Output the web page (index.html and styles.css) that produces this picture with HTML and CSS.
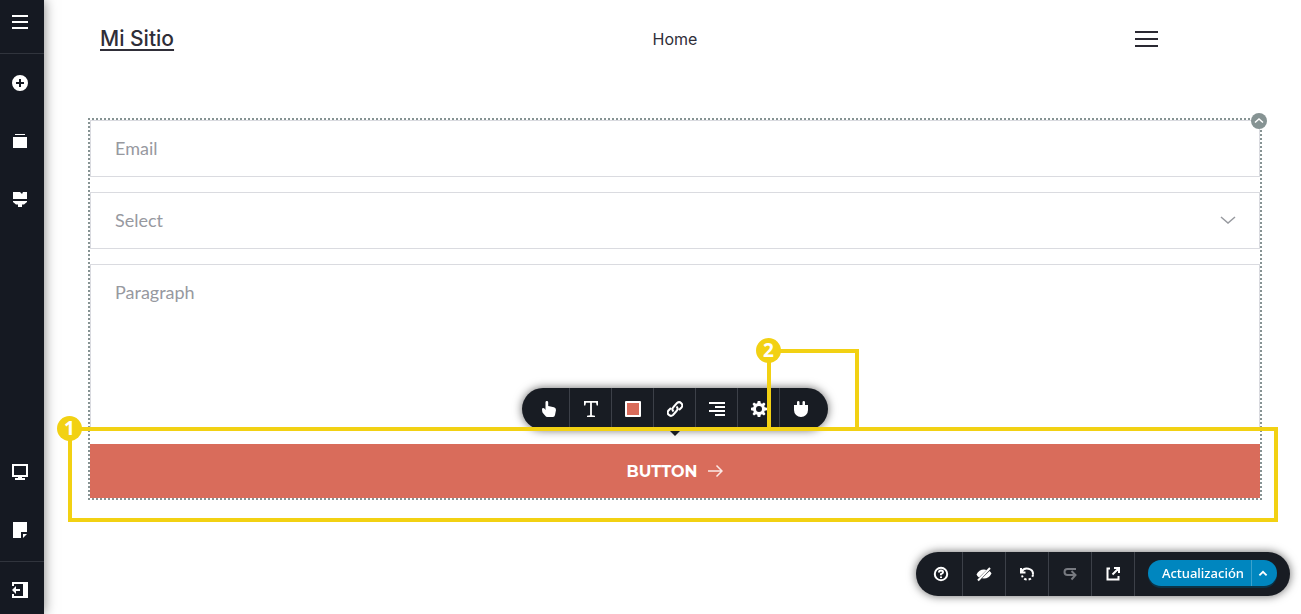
FILE: index.html
```html
<!DOCTYPE html>
<html lang="es">
<head>
    <meta charset="UTF-8">
    <meta name="viewport" content="width=device-width, initial-scale=1.0">
    <title>Mi Sitio</title>
    <link rel="stylesheet" href="styles.css">
</head>
<body>
    <aside class="sidebar">
        <button type="button" class="side-btn side-menu" aria-label="Menu">
            <svg class="icon" viewBox="0 0 16 16"><path d="M0 1h16v2H0zM0 7h16v2H0zM0 13h16v2H0z"/></svg>
        </button>
        <button type="button" class="side-btn" aria-label="Add">
            <svg class="icon" viewBox="0 0 16 16"><path fill-rule="evenodd" d="M8 0a8 8 0 1 1 0 16A8 8 0 0 1 8 0zM7 4v3H4v2h3v3h2V9h3V7H9V4z"/></svg>
        </button>
        <button type="button" class="side-btn" aria-label="Pages">
            <svg class="icon" viewBox="0 0 16 16"><path d="M3 1h10v1H3zM1 4h14v11H1z"/></svg>
        </button>
        <button type="button" class="side-btn" aria-label="Styles">
            <svg class="icon" viewBox="0 0 16 16"><path d="M1 1h7l2 2 1-2h4v7H1zM1 10h14v1L12 13.500h-2V16H6v-2.500H4L1 11z"/></svg>
        </button>
        <div class="side-bottom">
            <button type="button" class="side-btn" aria-label="Desktop view">
                <svg class="icon" viewBox="0 0 16 16"><path fill-rule="evenodd" d="M0 0h16v13H10v1h3v2H3v-2h3v-1H0zM2 2v9h12V2z"/></svg>
            </button>
            <button type="button" class="side-btn" aria-label="Notes">
                <svg class="icon" viewBox="0 0 16 16"><path d="M1 0h14v10H9v6H1zM11 12h4l-4 4z"/></svg>
            </button>
        </div>
        <button type="button" class="side-btn side-exit" aria-label="Exit">
            <svg class="icon" viewBox="0 0 16 16"><path fill-rule="evenodd" d="M0 0h16v16H0v-4h2v2h9V2H2v2H0zM0 8l4-4v3h4v2H4v3z"/></svg>
        </button>
    </aside>

    <main class="page">
        <header class="header">
            <a href="#" class="logo">Mi Sitio</a>
            <nav><a href="#" class="nav-link">Home</a></nav>
            <button type="button" class="burger" aria-label="Open menu"><span></span><span></span><span></span></button>
        </header>

        <form class="form">
            <input class="field" type="email" placeholder="Email" aria-label="Email">
            <div class="select-wrap">
                <select class="field" aria-label="Select">
                    <option>Select</option>
                </select>
                <svg class="chevron" viewBox="0 0 16 16"><path d="M1 5l7 6 7-6"/></svg>
            </div>
            <textarea class="field area" placeholder="Paragraph" aria-label="Paragraph"></textarea>
            <div class="submit-wrap">
                <button type="button" class="submit">
                    BUTTON
                    <svg class="arrow" viewBox="0 0 16 16"><path d="M1 8h14M9.500 2.500L15 8l-5.500 5.500"/></svg>
                </button>
                <div class="toolbar">
                    <button type="button" class="tool" aria-label="Action">
                        <svg class="icon" viewBox="0 0 16 16"><path d="M4.500 9V1.300a1.300 1.300 0 0 1 2.700 0V5L13 6.300Q15 6.800 15 9l-1 5q-.4 2-2 2H6.500Q5 16 4 14.500L1.500 11.500Q1 10 1 7.500 3 6 4.500 9z"/></svg>
                    </button>
                    <button type="button" class="tool" aria-label="Text">
                        <svg class="icon" viewBox="0 0 16 16"><path d="M1 0h14v4.500h-1.300L13 1.700H8.900v12.600l3.100.4V16H4v-1.300l3.100-.4V1.700H3l-.7 2.800H1z"/></svg>
                    </button>
                    <button type="button" class="tool" aria-label="Color"><span class="swatch"></span></button>
                    <button type="button" class="tool" aria-label="Link">
                        <svg class="icon line" viewBox="0 0 16 16"><path d="M6.500 10.500a3.200 3.200 0 0 1 0-4.500l3.500-4a3.200 3.200 0 0 1 4.500 4.500L12 9M9.500 5.500a3.200 3.200 0 0 1 0 4.500L6 14a3.200 3.200 0 0 1-4.500-4.500L4 7"/></svg>
                    </button>
                    <button type="button" class="tool" aria-label="Align right">
                        <svg class="icon" viewBox="0 0 16 16"><path d="M0 1h16v2H0zM6 5h10v2H6zM0 9h16v2H0zM6 13h10v2H6z"/></svg>
                    </button>
                    <button type="button" class="tool" aria-label="Settings">
                        <svg class="icon" viewBox="0 0 16 16"><path fill-rule="evenodd" d="M6.700 0h2.600l.5 2.300 1.200.5 2-1.300 1.500 1.500-1.300 2 .5 1.200 2.300.5v2.600l-2.300.5-.5 1.200 1.300 2L13 14.500l-2-1.300-1.200.5L9.300 16H6.700l-.5-2.300-1.200-.5-2 1.300L1.500 13l1.300-2-.5-1.200L0 9.300V6.700l2.300-.5.500-1.200-1.300-2L3 1.500l2 1.300 1.200-.5zM8 5a3 3 0 1 0 0 6 3 3 0 0 0 0-6z"/></svg>
                    </button>
                    <button type="button" class="tool" aria-label="Integrations">
                        <svg class="icon" viewBox="0 0 16 16"><path d="M4 4V1.300a1.200 1.200 0 0 1 2.500 0V4h3V1.300a1.200 1.200 0 0 1 2.500 0V4h3v5a7 7 0 0 1-14 0V4z"/></svg>
                    </button>
                    <div class="callout callout-two"><span class="badge">2</span></div>
                </div>
                <div class="callout callout-one"><span class="badge">1</span></div>
            </div>
            <button type="button" class="collapse" aria-label="Collapse">
                <svg viewBox="0 0 16 16"><path d="M4 9.500L8 6l4 3.500"/></svg>
            </button>
        </form>
    </main>

    <div class="bottom-bar">
        <button type="button" class="bar-btn" aria-label="Help">
            <svg class="icon line" viewBox="0 0 16 16"><circle cx="8" cy="8" r="6.200"/><path d="M6 6.500q0-2 2-2t2 1.700Q10 7.300 8 8.200v1M8 10.500v1.500"/></svg>
        </button>
        <button type="button" class="bar-btn" aria-label="Hide">
            <svg class="icon" viewBox="0 0 16 16"><path d="M.500 8.500Q3 3.500 8 3.500q1.500 0 2.500.5L3 11.500Q1.500 10.500.500 8.500zM13.500 5q1.500 1 2 2.500Q13 12.500 8 12.500l-2-.3z"/><path class="slash" d="M2 14.500L14 2"/></svg>
        </button>
        <button type="button" class="bar-btn" aria-label="Undo">
            <svg class="icon line" viewBox="0 0 16 16"><path d="M2 2v4.500h4.500M2.500 6a6 5.500 0 0 1 11.500 2.500"/><path stroke-dasharray="2.500 2" d="M14 8.500A5.600 5.600 0 0 1 3 9.500"/></svg>
        </button>
        <button type="button" class="bar-btn disabled" aria-label="Redo" disabled>
            <svg class="icon line" viewBox="0 0 16 16"><path d="M14 3H5.500a3 3 0 0 0 0 6H13M9.500 5L13.500 9l-4 4.500"/></svg>
        </button>
        <button type="button" class="bar-btn" aria-label="Preview">
            <svg class="icon line" viewBox="0 0 16 16"><path d="M5 2.500H2.500v11h11V10M9 2h5v5M14 2L7.500 8.500"/></svg>
        </button>
        <div class="update">
            <button type="button" class="update-main">Actualización</button>
            <button type="button" class="update-more" aria-label="More">
                <svg viewBox="0 0 10 10"><path d="M2 7l3-3 3 3"/></svg>
            </button>
        </div>
    </div>
</body>
</html>
```
FILE: styles.css
```css
* {
    box-sizing: border-box;
}
body {
    margin: 0;
    display: flex;
    min-height: 100vh;
    background: #fff;
    color: #2f2e38;
    font-family: Inter, sans-serif;
}
button {
    margin: 0;
    padding: 0;
    border: 0;
    background: none;
    color: inherit;
    font: inherit;
    cursor: pointer;
}
.icon {
    display: block;
    width: 16px;
    height: 16px;
    fill: #fff;
}
.icon.line {
    fill: none;
    stroke: #fff;
    stroke-width: 2;
}

/* sidebar */
.sidebar {
    display: flex;
    flex-direction: column;
    flex: none;
    width: 44px;
    height: 100vh;
    position: sticky;
    top: 0;
    background: #151922;
    box-shadow: 0 0 12px rgba(0, 0, 0, 0.5);
}
.side-btn {
    display: flex;
    align-items: center;
    flex: none;
    width: 100%;
    height: 58px;
    padding-left: 12px;
}
.side-menu {
    height: 54px;
    padding-bottom: 10px;
    border-bottom: 1px solid #30343d;
}
.side-bottom {
    margin-top: auto;
    padding-bottom: 2px;
}
.side-exit {
    height: 53px;
    padding-top: 4px;
    border-top: 1px solid #30343d;
}

/* site page */
.page {
    flex: 1;
    padding: 0 39px 0 44px;
}
.header {
    display: grid;
    grid-template-columns: 1fr auto 1fr;
    align-items: center;
    height: 78px;
    padding: 0 12px;
    margin-bottom: 40px;
}
.logo {
    justify-self: start;
    color: #2f2e38;
    font-size: 21px;
    font-weight: 500;
    line-height: 26px;
    text-underline-offset: 3px;
}
.nav-link {
    color: #2f2e38;
    font-size: 16px;
    text-decoration: none;
}
.burger {
    display: flex;
    flex-direction: column;
    gap: 5px;
    justify-self: end;
    width: 23px;
    margin-right: 92px;
}
.burger span {
    height: 2px;
    background: #2a2932;
}

/* form */
.form {
    position: relative;
    display: flex;
    flex-direction: column;
    gap: 15px;
    border: 2px dotted #869393;
}
.field {
    display: block;
    width: 100%;
    height: 57px;
    padding: 0 24px 2px;
    border: 1px solid #dadbe0;
    border-radius: 0;
    background: #fff;
    color: #97999f;
    font-family: Lato, sans-serif;
    font-size: 18px;
    appearance: none;
    outline: 0;
}
.field::placeholder {
    color: #97999f;
    opacity: 1;
}
.area {
    height: 165px;
    padding: 15px 24px;
    line-height: 24px;
    resize: none;
}
.select-wrap {
    position: relative;
}
.chevron {
    position: absolute;
    top: 20px;
    right: 24px;
    width: 16px;
    height: 16px;
    fill: none;
    stroke: #97999f;
    stroke-width: 1.500;
    pointer-events: none;
}
.submit-wrap {
    position: relative;
}
.submit {
    display: flex;
    align-items: center;
    justify-content: center;
    gap: 10px;
    width: 100%;
    height: 54px;
    background: #d96c5b;
    color: #fff;
    font-family: Montserrat, Inter, sans-serif;
    font-size: 16px;
    font-weight: 700;
}
.arrow {
    width: 16px;
    height: 16px;
    fill: none;
    stroke: #fbe9e6;
    stroke-width: 1.500;
}
.collapse {
    position: absolute;
    top: -7px;
    right: -7px;
    width: 16px;
    height: 16px;
    border-radius: 50%;
    background: #869393;
}
.collapse svg {
    display: block;
    fill: none;
    stroke: #fff;
    stroke-width: 1.500;
}

/* floating toolbar over the button */
.toolbar {
    position: absolute;
    bottom: 68px;
    left: 50%;
    display: flex;
    height: 42px;
    padding: 0 6px;
    border-radius: 21px;
    background: #181c23;
    box-shadow: 0 0 10px rgba(0, 0, 0, 0.6);
    transform: translateX(-50%);
}
.toolbar::after {
    content: "";
    position: absolute;
    top: 42px;
    left: 50%;
    border: 6px solid transparent;
    border-top-color: #181c23;
    transform: translateX(-50%);
}
.tool {
    display: flex;
    align-items: center;
    justify-content: center;
    width: 42px;
    border-right: 1px solid #3c4048;
}
.tool:nth-child(7) {
    border-right: 0;
}
.swatch {
    width: 16px;
    height: 16px;
    border: 2px solid #fff;
    border-radius: 1px;
    background: #d96c5b;
}

/* numbered callouts */
.callout {
    position: absolute;
    z-index: 2;
    border: 4px solid #f2d113;
    pointer-events: none;
}
.callout-one {
    top: -17px;
    right: -18px;
    bottom: -24px;
    left: -22px;
}
.callout-two {
    top: -39px;
    right: -31px;
    width: 92px;
    height: 82px;
}
.badge {
    position: absolute;
    top: -15px;
    left: -15px;
    width: 25px;
    height: 25px;
    border-radius: 50%;
    background: #f2d113;
    color: #fff;
    font: bold 19px/24px "Noto Sans", sans-serif;
    text-align: center;
}

/* bottom bar */
.bottom-bar {
    position: fixed;
    right: 11px;
    bottom: 18px;
    display: flex;
    height: 44px;
    padding: 0 13px 0 4px;
    border-radius: 22px;
    background: #181c23;
    box-shadow: 0 0 10px rgba(0, 0, 0, 0.6);
}
.bar-btn {
    display: flex;
    align-items: center;
    justify-content: center;
    width: 43px;
    border-right: 1px solid #3c4048;
}
.disabled .icon {
    stroke: #777a80;
}
.slash {
    fill: none;
    stroke: #fff;
    stroke-width: 2;
}
.update {
    display: flex;
    height: 26px;
    margin: 8px 0 0 13px;
    border-radius: 13px;
    background: #0086bf;
    box-shadow: 0 2px 0 #0b3448;
    color: #fff;
}
.update-main {
    padding: 0 7px 0 14px;
    font: 500 13px "Noto Sans", sans-serif;
}
.update-more {
    display: flex;
    align-items: center;
    width: 26px;
    padding-left: 5px;
    border-left: 1px solid #3ba2cd;
}
.update-more svg {
    width: 12px;
    height: 12px;
    fill: none;
    stroke: #fff;
    stroke-width: 1.500;
}
```
